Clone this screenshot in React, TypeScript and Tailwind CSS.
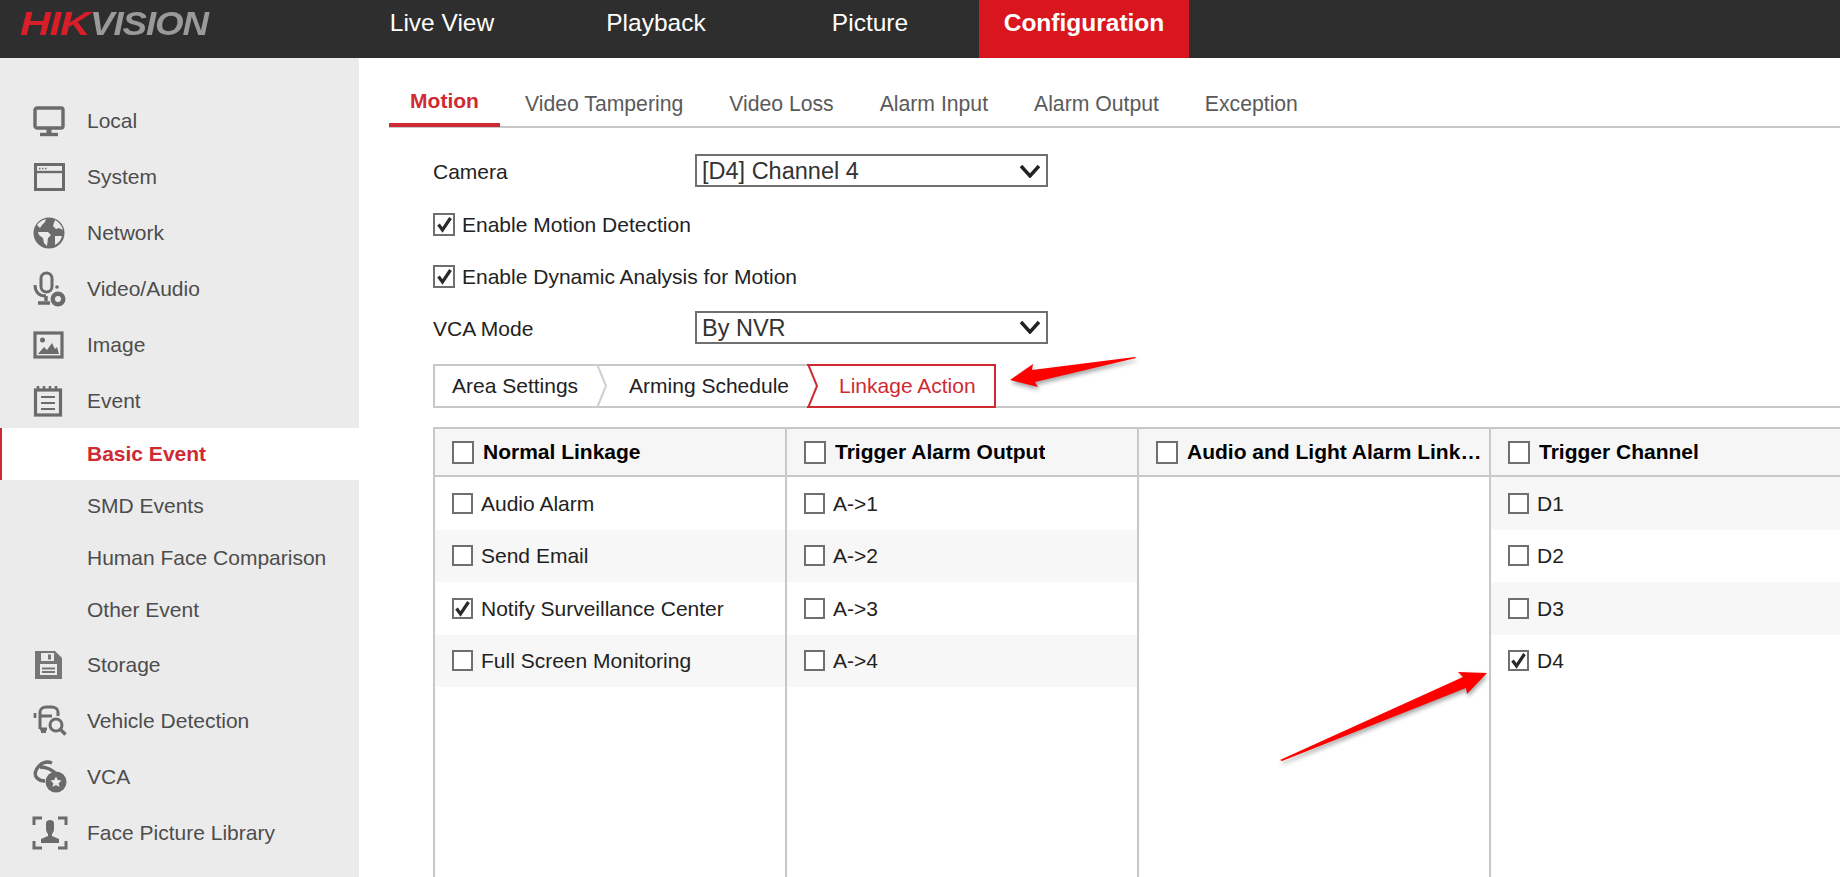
const font = "font-['Liberation_Sans',Arial,sans-serif]";

function IconLocal() {
  return (
    <svg width="34" height="32" viewBox="0 0 34 32" fill="none">
      <rect x="3" y="3" width="28" height="20" rx="2" stroke="#6b6b6b" strokeWidth="3.4" />
      <path d="M17 23v5" stroke="#6b6b6b" strokeWidth="5" />
      <path d="M8 29.5h18" stroke="#6b6b6b" strokeWidth="3.4" />
    </svg>
  );
}

function IconSystem() {
  return (
    <svg width="34" height="32" viewBox="0 0 34 32" fill="none">
      <rect x="3.5" y="3.5" width="28" height="25" stroke="#6b6b6b" strokeWidth="3" />
      <path d="M3.5 11h28" stroke="#6b6b6b" strokeWidth="2.4" />
      <path d="M7 7.5h1.5M10 7.5h1.5M13 7.5h1.5" stroke="#6b6b6b" strokeWidth="1.4" />
    </svg>
  );
}

function IconNetwork() {
  return (
    <svg width="34" height="34" viewBox="0 0 34 34">
      <circle cx="17" cy="17" r="15.5" fill="#6b6b6b" />
      <path d="M5 9c2-3 5-5 9-6l-1 3-3 3-2 3zM23 4c4 2 7 6 8 10l-4-2-3 1-3-3 1-3zM6 16l10 0 3 3-3 3-1 8-3-3-1-5-4-3zM23 20h7c-1 4-3 7-7 9z" fill="#ebebeb" />
    </svg>
  );
}

function IconVideoAudio() {
  return (
    <svg width="34" height="36" viewBox="0 0 34 36" fill="none">
      <rect x="9" y="2" width="11" height="19" rx="5.5" stroke="#6b6b6b" strokeWidth="3" />
      <path d="M3 14c0 7 4 11 11 11" stroke="#6b6b6b" strokeWidth="3" />
      <path d="M14 25v5M6 32h12" stroke="#6b6b6b" strokeWidth="3.4" />
      <circle cx="25" cy="16" r="1.8" fill="#6b6b6b" />
      <circle cx="26" cy="28" r="7.5" fill="#6b6b6b" />
      <circle cx="26" cy="28" r="3" fill="#ebebeb" />
    </svg>
  );
}

function IconImage() {
  return (
    <svg width="34" height="32" viewBox="0 0 34 32">
      <rect x="3" y="4" width="27" height="24" fill="none" stroke="#6b6b6b" strokeWidth="3.2" />
      <circle cx="10.5" cy="11" r="2.5" fill="#6b6b6b" />
      <path d="M6 25l6-7 3 3 5-7 3 6 2-2 2 7z" fill="#6b6b6b" />
    </svg>
  );
}

function IconEvent() {
  return (
    <svg width="34" height="34" viewBox="0 0 34 34" fill="none">
      <rect x="3.5" y="6" width="25" height="25" stroke="#6b6b6b" strokeWidth="3.2" />
      <path d="M6 2v5M12 2v5M18 2v5M24 2v5" stroke="#6b6b6b" strokeWidth="2.6" />
      <path d="M9 13h14M9 19h14M9 25h14" stroke="#6b6b6b" strokeWidth="2" />
    </svg>
  );
}

function IconStorage() {
  return (
    <svg width="34" height="32" viewBox="0 0 34 32">
      <path d="M3 2h20l7 7v21H3z" fill="#767676" />
      <rect x="9" y="4" width="13" height="8" fill="#ebebeb" />
      <rect x="16" y="5.5" width="3" height="5" fill="#767676" />
      <rect x="8" y="15" width="17" height="11" fill="#ebebeb" />
      <path d="M10 19.5h13M10 23h13" stroke="#767676" strokeWidth="2" />
    </svg>
  );
}

function IconVehicle() {
  return (
    <svg width="36" height="32" viewBox="0 0 36 32" fill="none">
      <path d="M8 24V7c0-3 3-5 6-5h6c3 0 6 2 6 5v4" stroke="#6b6b6b" strokeWidth="3" />
      <path d="M3 8v5M8 11h12M8 24h7" stroke="#6b6b6b" strokeWidth="2.8" />
      <path d="M9 24h5v4H9z" fill="#6b6b6b" />
      <circle cx="24" cy="20" r="6" stroke="#6b6b6b" strokeWidth="3" />
      <path d="M28.5 24.5l5 5" stroke="#6b6b6b" strokeWidth="3.4" />
    </svg>
  );
}

function IconVca() {
  return (
    <svg width="36" height="34" viewBox="0 0 36 34" fill="none">
      <path d="M20 3c-5-2-10 0-13 3-4 4-5 9-2 12 2 2 5 3 8 3" stroke="#6b6b6b" strokeWidth="3.4" />
      <path d="M8 7c6 0 13 3 17 8" stroke="#6b6b6b" strokeWidth="3.4" />
      <circle cx="24" cy="22" r="10.5" fill="#6b6b6b" />
      <path d="M24 16.5l1.7 3.6 3.8.5-2.8 2.6.8 3.8-3.5-1.9-3.5 1.9.8-3.8-2.8-2.6 3.8-.5z" fill="#ebebeb" />
    </svg>
  );
}

function IconFace() {
  return (
    <svg width="36" height="36" viewBox="0 0 36 36" fill="none">
      <path d="M2 10V3h8M26 3h8v7M2 26v7h8M26 33h8v-7" stroke="#6b6b6b" strokeWidth="3" />
      <path d="M14 8c0-2 2-3 4-3s4 1 4 3v6c0 2-1 4-2 5v2l7 3v4H9v-4l7-3v-2c-1-1-2-3-2-5z" fill="#6b6b6b" />
    </svg>
  );
}

function Checkbox({ checked, size = "sm" }: { checked?: boolean; size?: "sm" | "lg" }) {
  return (
    <span
      className={`flex shrink-0 items-center justify-center border-2 border-[#6f6f6f] bg-white ${size === "lg" ? "h-[23px] w-[22px]" : "h-[21px] w-[21px]"}`}
    >
      {checked && (
        <svg width="17" height="17" viewBox="0 0 17 17" fill="none">
          <path d="M2.5 8.5l4 5.5 8-12" stroke="#2a2a2a" strokeWidth="3.2" />
        </svg>
      )}
    </span>
  );
}

function SideItem({ icon, label }: { icon: React.ReactNode; label: string }) {
  return (
    <div className="flex h-[56px] items-center text-[#4d4d4d]">
      <span className="flex w-[87px] justify-start pl-[32px]">{icon}</span>
      <span>{label}</span>
    </div>
  );
}

function SubItem({ label, active }: { label: string; active?: boolean }) {
  if (active) {
    return (
      <div className="flex h-[52px] items-center border-l-2 border-[#cf2a34] bg-white pl-[85px] font-bold text-[#cf2a34]">
        {label}
      </div>
    );
  }
  return <div className="flex h-[52px] items-center pl-[87px] text-[#4d4d4d]">{label}</div>;
}

function Sidebar() {
  return (
    <aside className="w-[359px] shrink-0 bg-[#ebebeb] pt-[35px] text-[21px]">
      <SideItem icon={<IconLocal />} label="Local" />
      <SideItem icon={<IconSystem />} label="System" />
      <SideItem icon={<IconNetwork />} label="Network" />
      <SideItem icon={<IconVideoAudio />} label="Video/Audio" />
      <SideItem icon={<IconImage />} label="Image" />
      <div className="-mb-[1px]">
        <SideItem icon={<IconEvent />} label="Event" />
      </div>
      <SubItem label="Basic Event" active />
      <SubItem label="SMD Events" />
      <SubItem label="Human Face Comparison" />
      <div className="mb-[1px]">
        <SubItem label="Other Event" />
      </div>
      <SideItem icon={<IconStorage />} label="Storage" />
      <SideItem icon={<IconVehicle />} label="Vehicle Detection" />
      <SideItem icon={<IconVca />} label="VCA" />
      <SideItem icon={<IconFace />} label="Face Picture Library" />
    </aside>
  );
}

function Select({ value }: { value: string }) {
  return (
    <div className="flex h-[33px] w-[353px] items-center justify-between border-2 border-[#6f6f6f] pl-[5px] pr-[5px] text-[23.5px] text-[#333]">
      <span className="pt-[2px]">{value}</span>
      <svg width="22" height="14" viewBox="0 0 22 14" fill="none">
        <path d="M2 2l9 10 9-10" stroke="#222" strokeWidth="3.4" />
      </svg>
    </div>
  );
}

function Crumb() {
  return (
    <svg width="12" height="44" viewBox="0 0 12 44" fill="none" className="shrink-0">
      <path d="M1 0l9 22-9 22" stroke="currentColor" strokeWidth="2" />
    </svg>
  );
}

const columns = [
  { title: "Normal Linkage", rows: ["Audio Alarm", "Send Email", "Notify Surveillance Center", "Full Screen Monitoring"], checked: [2], firstGray: false },
  { title: "Trigger Alarm Output", rows: ["A->1", "A->2", "A->3", "A->4"], checked: [], firstGray: false },
  { title: "Audio and Light Alarm Linkage", rows: [], checked: [], firstGray: false },
  { title: "Trigger Channel", rows: ["D1", "D2", "D3", "D4"], checked: [3], firstGray: true },
];

function LinkColumn({ col, last }: { col: (typeof columns)[number]; last: boolean }) {
  return (
    <div className={`h-full min-w-0 border-l-2 border-[#c8c8c8] ${last ? "flex-1" : "w-[352px] shrink-0"}`}>
      <div className="flex h-[48px] items-center gap-[9px] border-b-2 border-[#c8c8c8] bg-[#f6f6f6] pl-[17px] pr-[4px] font-bold text-black">
        <Checkbox size="lg" />
        <span className="truncate">{col.title}</span>
      </div>
      {col.rows.map((row, i) => {
        const gray = col.firstGray ? i % 2 === 0 : i % 2 === 1;
        return (
          <div key={row} className={`flex h-[52.5px] items-center gap-[8px] pl-[17px] text-[#222] ${gray ? "bg-[#f7f7f7]" : "bg-white"}`}>
            <Checkbox checked={col.checked.includes(i as never)} />
            <span>{row}</span>
          </div>
        );
      })}
    </div>
  );
}

export default function App() {
  return (
    <div className={`${font} relative flex h-[877px] w-[1840px] flex-col overflow-hidden bg-white`}>
      <header className="flex h-[58px] shrink-0 bg-[#2e2e2e] text-[24.5px] text-white">
        <div className="flex w-[337px] shrink-0 items-start pl-[20px] pt-[3px] text-[34px] leading-[40px] font-bold tracking-[-1px] italic">
          <span className="inline-block w-[70px] origin-left scale-x-[1.25] text-[#d81e28]">HIK</span>
          <span className="inline-block origin-left scale-x-[1.08] text-[#9a9a9a]">VISION</span>
        </div>
        <nav className="flex gap-[4px]">
          <div className="flex w-[210px] items-start justify-center pt-[5px]">Live View</div>
          <div className="flex w-[210px] items-start justify-center pt-[5px]">Playback</div>
          <div className="flex w-[210px] items-start justify-center pt-[5px]">Picture</div>
          <div className="flex w-[210px] items-start justify-center bg-[#d9161e] pt-[5px] font-bold">Configuration</div>
        </nav>
      </header>

      <div className="flex min-h-0 flex-1">
        <Sidebar />
        <main className="min-w-0 flex-1 pl-[30px] text-[21px]">
          <div className="flex h-[70px] items-end border-b-2 border-[#c8c8c8] text-[#5a5a5a]">
            <div className="-mb-[1px] flex h-[47px] w-[111px] items-start justify-center border-b-4 border-[#cf2a34] pt-[5px] font-bold text-[#cf2a34]">
              Motion
            </div>
            <div className="flex h-[46px] items-start gap-[46px] pl-[25px] pt-[8px] text-[21.2px]">
              <span>Video Tampering</span>
              <span>Video Loss</span>
              <span>Alarm Input</span>
              <span>Alarm Output</span>
              <span>Exception</span>
            </div>
          </div>

          <div className="pl-[44px] text-[#222]">
            <div className="mt-[26px] flex items-center">
              <span className="w-[262px] pt-[2px]">Camera</span>
              <Select value="[D4] Channel 4" />
            </div>
            <div className="mt-[20px] flex h-[34px] items-center gap-[7px]">
              <Checkbox checked size="lg" />
              <span>Enable Motion Detection</span>
            </div>
            <div className="mt-[18px] flex h-[34px] items-center gap-[7px]">
              <Checkbox checked size="lg" />
              <span>Enable Dynamic Analysis for Motion</span>
            </div>
            <div className="mt-[17px] flex items-center">
              <span className="w-[262px] pt-[2px]">VCA Mode</span>
              <Select value="By NVR" />
            </div>

            <div className="mt-[20px] flex h-[44px] border-b-2 border-[#c8c8c8]">
              <div className="flex h-[44px] w-[374px] items-center border-2 border-r-0 border-[#c8c8c8] pl-[17px] text-[#222]">
                <span>Area Settings</span>
                <span className="ml-[18px] text-[#cfcfcf]"><Crumb /></span>
                <span className="ml-[21px]">Arming Schedule</span>
              </div>
              <div className="flex h-[44px] w-[189px] items-center border-y-2 border-r-2 border-[#cf2a34] text-[#cf2a34]">
                <Crumb />
                <span className="ml-[20px]">Linkage Action</span>
              </div>
            </div>

            <div className="mt-[19px] flex h-[460px] border-t-2 border-[#c8c8c8]">
              {columns.map((col, i) => (
                <LinkColumn key={col.title} col={col} last={i === columns.length - 1} />
              ))}
            </div>
          </div>
        </main>
      </div>

      {/* red annotation arrows drawn over the screenshot */}
      <svg className="pointer-events-none absolute inset-0 drop-shadow-[1px_3px_2px_rgba(0,0,0,0.35)]" width="1840" height="877" viewBox="0 0 1840 877">
        <polygon points="1010,380 1033,364 1032,370 1135,357 1136,358 1035,382 1038,387" fill="#ff0000" />
        <polygon points="1487,673 1458,672 1463,677 1280,760 1282,761 1466,688 1467,694" fill="#ff0000" />
      </svg>
    </div>
  );
}
